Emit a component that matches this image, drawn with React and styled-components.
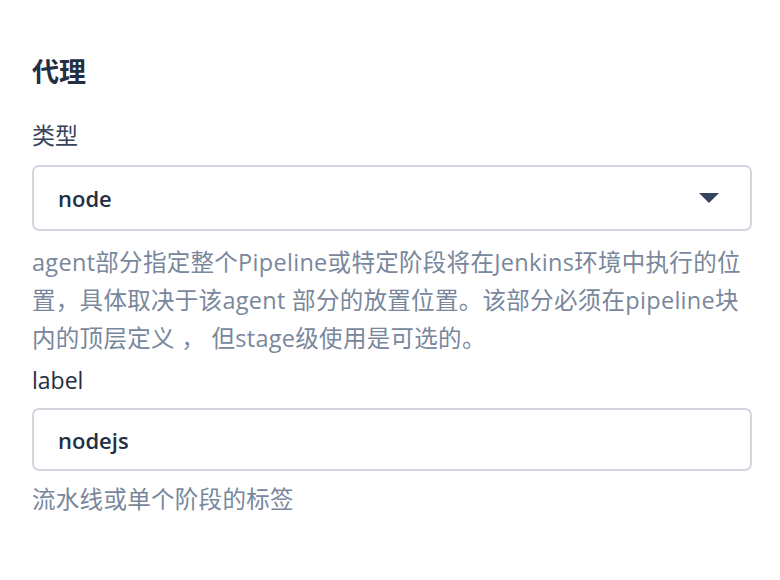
import styled, { createGlobalStyle } from 'styled-components';

const GlobalStyle = createGlobalStyle`
  html, body {
    margin: 0;
    padding: 0;
    background: #fff;
  }
  body {
    font-family: 'Open Sans', 'Noto Sans CJK SC', sans-serif;
  }
`;

const Page = styled.div`
  padding: 52px 28px 0 32px;
  width: 780px;
  box-sizing: border-box;
`;

const Title = styled.h2`
  margin: 0 0 25px;
  font-size: 27px;
  line-height: 40px;
  font-weight: 700;
  color: #242e42;
`;

const Field = styled.div`
  display: flex;
  flex-direction: column;
`;

const Label = styled.label`
  margin-top: ${({ gap }) => gap || 0}px;
  font-size: 23px;
  line-height: 36px;
  color: ${({ dark }) => (dark ? '#242e42' : '#36435c')};
`;

const Box = styled.div`
  display: flex;
  align-items: center;
  justify-content: space-between;
  margin-top: ${({ gap }) => gap}px;
  height: ${({ h }) => h}px;
  padding: 0 31px 0 24px;
  border: 2px solid #d1d6df;
  border-radius: 7px;
  box-sizing: border-box;
  font-size: 22px;
  font-weight: 600;
  color: #242e42;
`;

const Arrow = styled.span`
  width: 0;
  height: 0;
  border-left: 10px solid transparent;
  border-right: 10px solid transparent;
  border-top: 10px solid #36435c;
`;

const Help = styled.p`
  margin: ${({ gap }) => gap}px 0 0;
  font-size: 23.5px;
  line-height: 38px;
  letter-spacing: 0.3px;
  color: #79879c;
`;

export default function App() {
  return (
    <>
      <GlobalStyle />
      <Page>
        <Title>代理</Title>
        <Field>
          <Label>类型</Label>
          <Box gap={12} h={66}>
            node
            <Arrow />
          </Box>
          <Help gap={12}>
            agent部分指定整个Pipeline或特定阶段将在Jenkins环境中执行的位置，具体取决于该agent 部分的放置位置。该部分必须在pipeline块内的顶层定义 ， 但stage级使用是可选的。
          </Help>
        </Field>
        <Field>
          <Label dark gap={5}>label</Label>
          <Box gap={10} h={63}>nodejs</Box>
          <Help gap={9}>流水线或单个阶段的标签</Help>
        </Field>
      </Page>
    </>
  );
}
